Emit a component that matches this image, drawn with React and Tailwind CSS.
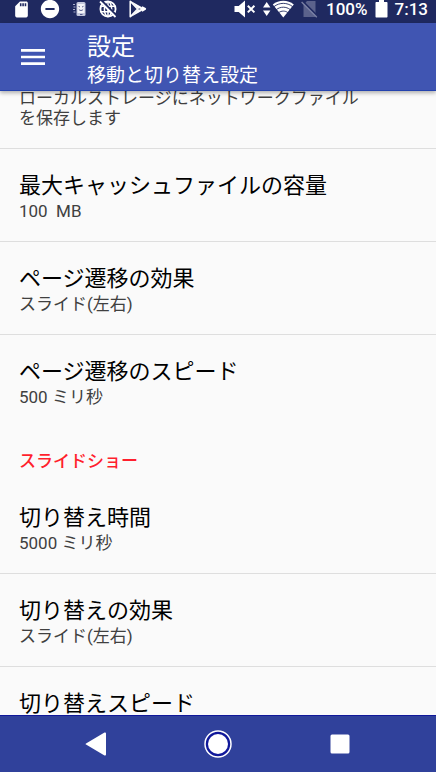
import React from 'react';
import { MdMenu, MdSdCard, MdRemoveCircle } from 'react-icons/md';

const pageSettings = [
    { title: '最大キャッシュファイルの容量', summary: '100  MB' },
    { title: 'ページ遷移の効果', summary: 'スライド(左右)' },
    { title: 'ページ遷移のスピード', summary: '500 ミリ秒' },
];

const slideshowSettings = [
    { title: '切り替え時間', summary: '5000 ミリ秒' },
    { title: '切り替えの効果', summary: 'スライド(左右)' },
    { title: '切り替えスピード', summary: null },
];

function PhoneChatIcon() {
    return (
        <svg width="14" height="16" viewBox="0 0 14 16" fill="none">
            <rect x="3.5" y="1" width="9" height="14" rx="1.5" fill="#c3c7dc" />
            <rect x="4.5" y="3" width="7" height="9" fill="#f4f5fa" />
            <path d="M5.500 5.300l1.500.7M10.500 5.300L9 6M5.800 8.300c1 1.600 3.400 1.600 4.400 0M7 13.500h2.500" stroke="#4a5183" strokeWidth="0.9" />
            <path d="M0 3.500h2M.5 6h2M0 8.500h2M.5 11h2" stroke="#a9aecb" strokeWidth="1" />
        </svg>
    );
}

function GlobeOffIcon() {
    return (
        <svg width="18" height="18" viewBox="0 0 18 18" fill="none">
            <circle cx="9" cy="9" r="7.6" stroke="white" strokeWidth="1.8" />
            <ellipse cx="9" cy="9" rx="3.6" ry="7.6" stroke="white" strokeWidth="1.5" />
            <path d="M9 1v16M1.5 6.2h15M1.5 11.8h15" stroke="white" strokeWidth="1.5" />
            <path d="M2.5 0.5l15 15" stroke="#1f2960" strokeWidth="2" />
            <path d="M1 1.5l15.5 15.5" stroke="white" strokeWidth="1.8" />
        </svg>
    );
}

function PlayStoreIcon() {
    return (
        <svg width="18" height="18" viewBox="0 0 18 18">
            <path d="M1.200 1.200v15.600L8.600 9z" fill="none" stroke="white" strokeWidth="1.500" strokeLinejoin="round" />
            <path d="M1 .4l12 6.800-2.800 2.600zM1 17.600l12-6.800-2.800-2.600z" fill="white" />
            <path d="M13.400 6.200l3.300 1.900c.6.4.6 1.300 0 1.700l-3.300 1.900L10.800 9z" fill="white" />
        </svg>
    );
}

function MutedIcon() {
    return (
        <svg width="22" height="18" viewBox="0 0 22 18">
            <path d="M.5 6h4.2L11 .6v16.800L4.700 12H.5z" fill="white" />
            <path d="M13.800 5.800l6.600 6.600M20.400 5.800l-6.600 6.600" stroke="white" strokeWidth="2" />
        </svg>
    );
}

function WifiIcon() {
    return (
        <svg width="31" height="18" viewBox="0 0 31 18">
            <path d="M0 7.500L3.700 2l3.700 5.500zM0 10.500L3.700 16l3.700-5.500z" fill="white" />
            <path d="M20.300 17.400L9.800 4.400C15.700-.5 24.900-.5 30.800 4.400z" fill="white" />
            <path d="M11 6.600c5.400-4.300 13.200-4.300 18.600 0M13.400 9.600c3.900-3.200 9.900-3.200 13.800 0M15.800 12.600c2.500-2 6.500-2 9 0" fill="none" stroke="#1f2960" strokeWidth="0.9" />
        </svg>
    );
}

function NoSimIcon() {
    return (
        <svg width="17" height="18" viewBox="0 0 17 18">
            <path d="M2.500 5L6 1h8.500v16h-12z" fill="#5b628c" />
            <path d="M1.600 1.200l15.200 15.200" stroke="#1f2960" strokeWidth="1.800" />
            <path d="M.6 2l15.200 15.200" stroke="#7a80a4" strokeWidth="1.400" />
        </svg>
    );
}

function BatteryIcon() {
    return (
        <svg width="13" height="18" viewBox="0 0 13 18">
            <path d="M4 0h5v2h2.500c.6 0 1 .4 1 1v13.500c0 .6-.4 1-1 1h-10c-.6 0-1-.4-1-1V3c0-.6.4-1 1-1H4z" fill="white" />
        </svg>
    );
}

function StatusBar() {
    return (
        <div className="h-[23px] shrink-0 bg-[#1f2960] text-white flex justify-between pl-3 pr-2 pb-[5px]">
            <div className="flex items-center gap-3">
                <div className="flex items-center gap-2">
                    <MdSdCard size={19} />
                    <MdRemoveCircle size={22} />
                </div>
                <PhoneChatIcon />
                <GlobeOffIcon />
                <PlayStoreIcon />
            </div>
            <div className="flex items-center gap-[7px] text-[17px] leading-[18px] font-medium">
                <MutedIcon />
                <WifiIcon />
                <NoSimIcon />
                <span className="pl-px">100%</span>
                <BatteryIcon />
                <span>7:13</span>
            </div>
        </div>
    );
}

function SettingRow({ title, summary, last }) {
    return (
        <li className={last ? '' : 'border-b border-[#dedede]'}>
            <button className="block w-full text-left px-[19px] pt-[22px] pb-5">
                <span className="block text-[22px] leading-[30px] text-black">{title}</span>
                {summary && (
                    <span className="block text-[17px] leading-5 text-[#404040] whitespace-pre">{summary}</span>
                )}
            </button>
        </li>
    );
}

export default function App() {
    return (
        <div
            lang="ja"
            className="h-screen flex flex-col overflow-hidden bg-[#fafafa] font-[Roboto,'Noto_Sans_CJK_JP',sans-serif]"
        >
            <StatusBar />

            {/* Toolbar */}
            <header className="relative z-10 h-[68px] shrink-0 flex items-center bg-[#4055b2] border-b border-[#2443ae] text-white shadow-[0_2px_4px_rgba(0,0,0,0.3)]">
                <button aria-label="メニュー" className="pl-[17px] pr-[38px]">
                    <MdMenu size={32} />
                </button>
                <div className="pt-2">
                    <h1 className="text-[24px] leading-[30px]">設定</h1>
                    <p className="text-[19px] leading-[28px]">移動と切り替え設定</p>
                </div>
            </header>

            {/* Scrolled settings list */}
            <main className="flex-1 min-h-0 overflow-hidden">
                <p className="-mt-[3px] pl-[19px] pr-16 pb-5 text-[17px] leading-5 text-[#404040] border-b border-[#dedede]">
                    ローカルストレージにネットワークファイルを保存します
                </p>
                <ul>
                    {pageSettings.map((item, i) => (
                        <SettingRow key={item.title} {...item} last={i === pageSettings.length - 1} />
                    ))}
                </ul>
                <h2 className="px-[19px] pt-6 pb-[10px] text-[17px] leading-5 font-medium text-[#ff1f2d]">スライドショー</h2>
                <ul>
                    {slideshowSettings.map((item, i) => (
                        <SettingRow key={item.title} {...item} last={i === slideshowSettings.length - 1} />
                    ))}
                </ul>
            </main>

            {/* Navigation bar */}
            <nav className="h-[57px] shrink-0 flex items-center justify-center gap-[90px] bg-[#30419b] border-t border-[#10189a]">
                <button aria-label="戻る">
                    <svg width="32" height="32" viewBox="0 0 32 32">
                        <path d="M6 15.400L24.500 4.600c.9-.5 1.500-.1 1.500.8v21.200c0 .9-.6 1.300-1.500.8L6 16.600c-.5-.3-.5-.9 0-1.200z" fill="white" />
                    </svg>
                </button>
                <button aria-label="ホーム">
                    <svg width="32" height="32" viewBox="0 0 32 32">
                        <circle cx="16" cy="16" r="13" fill="#10189a" stroke="white" strokeWidth="1.500" />
                        <circle cx="16" cy="16" r="10" fill="white" />
                    </svg>
                </button>
                <button aria-label="最近使ったアプリ">
                    <svg width="32" height="32" viewBox="0 0 32 32">
                        <rect x="6.500" y="6.500" width="19" height="19" rx="1.500" fill="white" />
                    </svg>
                </button>
            </nav>
        </div>
    );
}
